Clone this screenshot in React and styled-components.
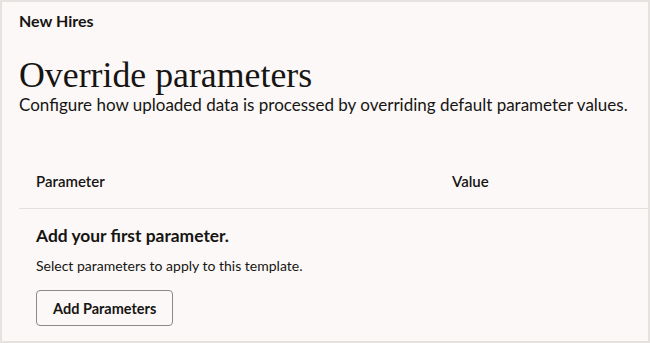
import React from "react"
import styled, { createGlobalStyle } from "styled-components"

const GlobalStyle = createGlobalStyle`
  html, body {
    margin: 0;
    padding: 0;
    background: #fcf8f7;
  }
  body {
    font-family: Lato, "Noto Sans", sans-serif;
    color: #161513;
  }
`

const Frame = styled.div`
  box-sizing: border-box;
  width: 650px;
  height: 343px;
  border: 2px solid #e5e2df;
  background: #fcf8f7;
  padding: 9px 0 0 17px;
  overflow: hidden;
`

const Crumb = styled.div`
  font-size: 16px;
  font-weight: 700;
  line-height: 20px;
`

const Title = styled.h1`
  margin: 26px 0 0;
  font-family: "Liberation Serif", Georgia, serif;
  font-weight: 400;
  font-size: 35.8px;
  line-height: 37px;
`

const Lead = styled.p`
  margin: 0;
  font-size: 17px;
  line-height: 22px;
`

const Table = styled.div`
  margin-top: 47px;
`

const HeadRow = styled.div`
  display: grid;
  grid-template-columns: 416px 1fr;
  padding: 9px 0 18px 17px;
  line-height: 18px;
  border-bottom: 1px solid #e3dfdc;
  font-size: 15px;
`

const HeadCell = styled.div`
  font-weight: 600;
`

const Empty = styled.div`
  padding: 16px 0 0 17px;
`

const EmptyTitle = styled.div`
  font-size: 17.4px;
  font-weight: 700;
  line-height: 22px;
`

const EmptyText = styled.div`
  margin-top: 9px;
  font-size: 14px;
  line-height: 20px;
`

const Button = styled.button`
  margin-top: 14px;
  box-sizing: border-box;
  height: 36px;
  padding: 0 16px;
  border: 1px solid #8c8a87;
  border-radius: 4px;
  background: #fcf8f7;
  font-family: Lato, "Noto Sans", sans-serif;
  font-size: 14.5px;
  font-weight: 700;
  color: #161513;
`

export default function App() {
  return (
    <>
      <GlobalStyle />
      <Frame>
        <Crumb>New Hires</Crumb>
        <Title>Override parameters</Title>
        <Lead>Configure how uploaded data is processed by overriding default parameter values.</Lead>
        <Table>
          <HeadRow>
            <HeadCell>Parameter</HeadCell>
            <HeadCell>Value</HeadCell>
          </HeadRow>
          <Empty>
            <EmptyTitle>Add your first parameter.</EmptyTitle>
            <EmptyText>Select parameters to apply to this template.</EmptyText>
            <Button>Add Parameters</Button>
          </Empty>
        </Table>
      </Frame>
    </>
  )
}
